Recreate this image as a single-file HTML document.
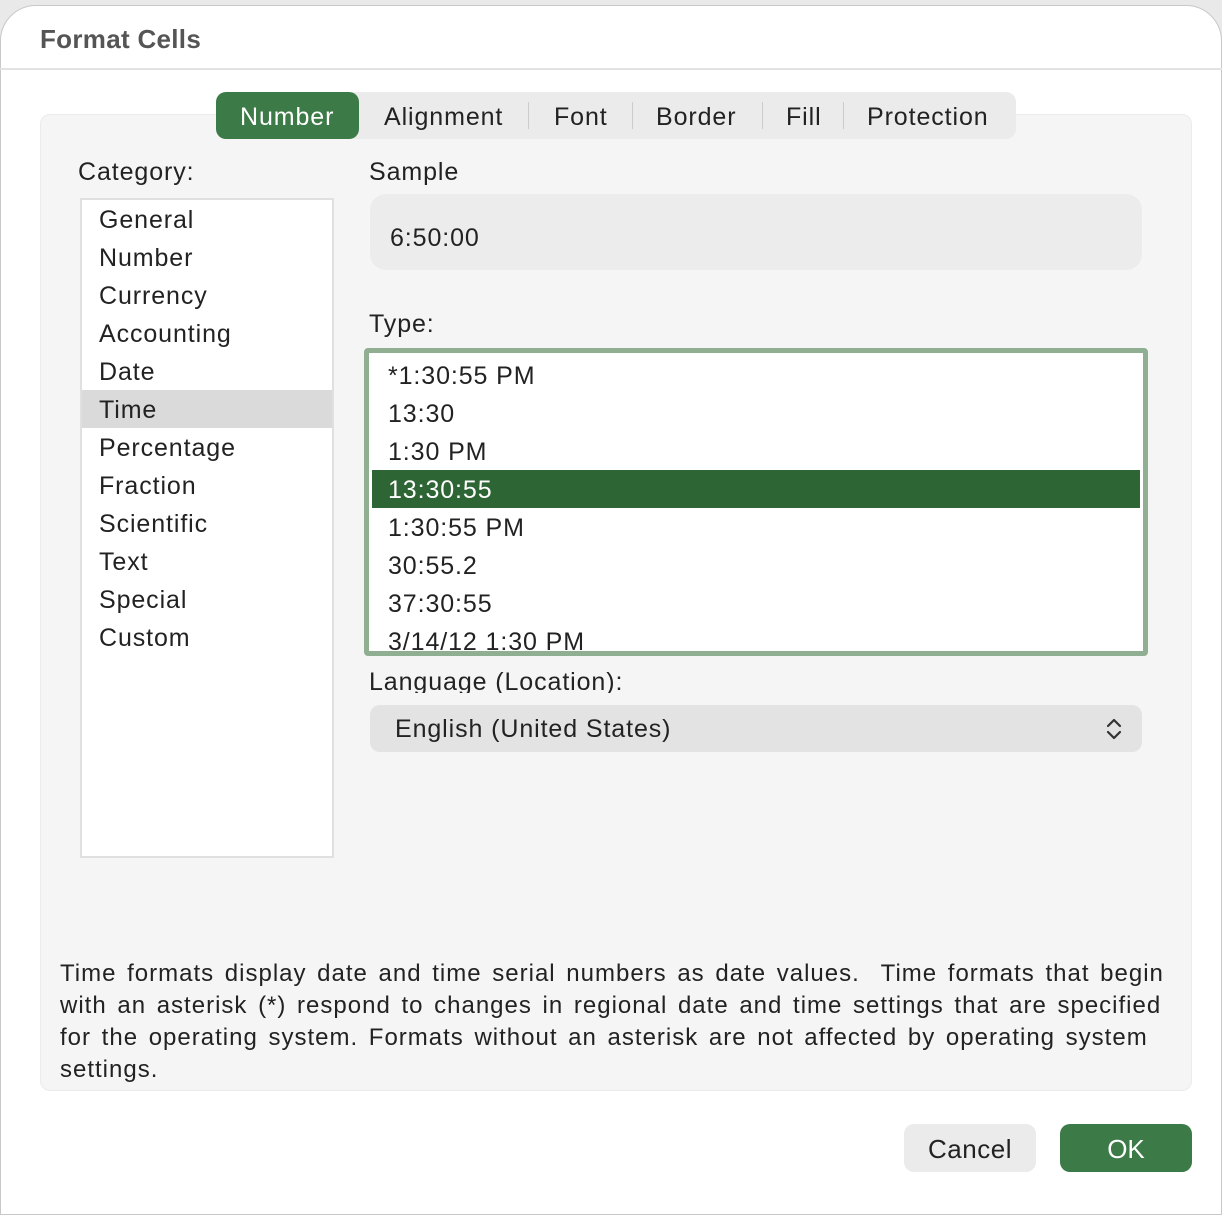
<!DOCTYPE html>
<html><head><meta charset="utf-8"><style>
*{margin:0;padding:0;box-sizing:border-box}
body{width:1222px;height:1206px;background:#e9e9e9;font-family:"Liberation Sans",sans-serif;position:relative;overflow:hidden;color:#222}
.dlg{position:absolute;left:0;top:5px;width:1222px;height:1210px;background:#fff;border-radius:36px 36px 0 0;border:1px solid #c8c8c8}
.a{position:absolute}
.t{font-size:25px;line-height:38px;white-space:nowrap;letter-spacing:0.9px}
</style></head><body>
<div class="dlg"></div>
<div class="a" style="left:40px;top:24px;font-size:26px;font-weight:bold;color:#555;letter-spacing:0.3px">Format Cells</div>
<div class="a" style="left:0;top:68px;width:1222px;height:2px;background:#e2e2e2"></div>
<div class="a" style="left:40px;top:114px;width:1152px;height:977px;background:#f5f5f5;border:1px solid #ebebeb;border-radius:10px"></div>
<!-- tabs -->
<div class="a" style="left:216px;top:92px;width:800px;height:47px;background:#ebebeb;border-radius:10px"></div>
<div class="a" style="left:216px;top:92px;width:143px;height:47px;background:#3c7a47;border-radius:10px"></div>
<div class="a t" style="left:240px;top:98px;color:#fff">Number</div>
<div class="a t" style="left:384px;top:98px">Alignment</div>
<div class="a" style="left:528px;top:102px;width:1px;height:27px;background:#ccc"></div>
<div class="a t" style="left:554px;top:98px">Font</div>
<div class="a" style="left:632px;top:102px;width:1px;height:27px;background:#ccc"></div>
<div class="a t" style="left:656px;top:98px">Border</div>
<div class="a" style="left:762px;top:102px;width:1px;height:27px;background:#ccc"></div>
<div class="a t" style="left:786px;top:98px">Fill</div>
<div class="a" style="left:843px;top:102px;width:1px;height:27px;background:#ccc"></div>
<div class="a t" style="left:867px;top:98px">Protection</div>
<!-- category -->
<div class="a t" style="left:78px;top:153px">Category:</div>
<div class="a" style="left:80px;top:198px;width:254px;height:660px;background:#fff;border:2px solid #e0e0e0"></div>
<div class="a" style="left:82px;top:390px;width:250px;height:38px;background:#dadada"></div>
<div class="a t" style="left:99px;top:201px">General<br>Number<br>Currency<br>Accounting<br>Date<br>Time<br>Percentage<br>Fraction<br>Scientific<br>Text<br>Special<br>Custom</div>
<!-- sample -->
<div class="a t" style="left:369px;top:153px">Sample</div>
<div class="a" style="left:370px;top:194px;width:772px;height:76px;background:#ececec;border-radius:16px"></div>
<div class="a t" style="left:390px;top:219px">6:50:00</div>
<!-- type -->
<div class="a t" style="left:369px;top:305px">Type:</div>
<div class="a" style="left:364px;top:348px;width:784px;height:308px;background:#fff;border:5px solid #8fae92;border-radius:4px;overflow:hidden">
 <div class="a" style="left:3px;top:117px;width:768px;height:38px;background:#2e6534"></div>
 <div class="a t" style="left:19px;top:4px">*1:30:55 PM<br>13:30<br>1:30 PM<br><span style="color:#fff">13:30:55</span><br>1:30:55 PM<br>30:55.2<br>37:30:55<br>3/14/12 1:30 PM</div>
</div>
<div class="a t" style="left:369px;top:663px;background:#f5f5f5;height:30px;overflow:hidden">Language (Location):</div>
<div class="a" style="left:370px;top:705px;width:772px;height:47px;background:#e3e3e3;border-radius:10px"></div>
<div class="a t" style="left:395px;top:710px">English (United States)</div>
<svg class="a" style="left:1104px;top:717px" width="20" height="24" viewBox="0 0 20 24"><path d="M4 9 L10 3 L16 9 M4 15 L10 21 L16 15" fill="none" stroke="#333" stroke-width="2.2" stroke-linecap="round" stroke-linejoin="round"/></svg>
<!-- desc -->
<div class="a" style="left:60px;top:958px;font-size:24px;line-height:32px;white-space:nowrap;letter-spacing:1px;word-spacing:3px">Time formats display date and time serial numbers as date values.&nbsp; Time formats that begin<br>with an asterisk (*) respond to changes in regional date and time settings that are specified<br>for the operating system. Formats without an asterisk are not affected by operating system<br>settings.</div>
<!-- buttons -->
<div class="a" style="left:904px;top:1124px;width:132px;height:48px;background:#ebebeb;border-radius:10px;text-align:center;font-size:26px;line-height:50px;letter-spacing:0.5px">Cancel</div>
<div class="a" style="left:1060px;top:1124px;width:132px;height:48px;background:#3c7a47;border-radius:10px;text-align:center;font-size:26px;line-height:50px;color:#fff">OK</div>
</body></html>
